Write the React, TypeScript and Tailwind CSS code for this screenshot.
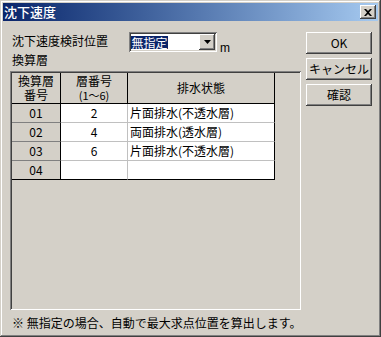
import React from "react";

const raised =
  "shadow-[inset_-1px_-1px_#404040,inset_1px_1px_#ffffff,inset_-2px_-2px_#808080,inset_2px_2px_#d4d0c8]";
const sunken =
  "shadow-[inset_1px_1px_#808080,inset_-1px_-1px_#ffffff,inset_2px_2px_#404040,inset_-2px_-2px_#d4d0c8]";

const rows = [
  { no: "01", layer: "2", state: "片面排水(不透水層)" },
  { no: "02", layer: "4", state: "両面排水(透水層)" },
  { no: "03", layer: "6", state: "片面排水(不透水層)" },
  { no: "04", layer: "", state: "" },
];

export default function App() {
  return (
    <div className="w-[381px] h-[337px] bg-[#d4d0c8] p-[3px] flex flex-col text-[12px] text-black font-['Noto_Sans_CJK_JP','Noto_Sans_CJK_SC',sans-serif] shadow-[inset_-1px_-1px_#404040,inset_1px_1px_#d4d0c8,inset_-2px_-2px_#808080,inset_2px_2px_#ffffff]">
      {/* Title bar */}
      <div className="h-[18px] flex items-center justify-between bg-gradient-to-r from-[#0a246a] to-[#a6caf0] pl-[1px] pr-[2px]">
        <span className="text-white text-[13px] leading-[18px] font-medium">沈下速度</span>
        <div className={`w-[16px] h-[14px] bg-[#d4d0c8] flex items-center justify-center ${raised}`}>
          <svg width="8" height="7" viewBox="0 0 8 7">
            <path d="M0 0h2l2 2 2-2h2L5 3.5 8 7H6L4 5 2 7H0l3-3.5z" fill="#000" />
          </svg>
        </div>
      </div>

      {/* Body */}
      <div className="flex flex-1">
        <div className="w-[298px] pl-[7px] pt-[11px] flex flex-col">
          <div className="flex h-[20px]">
            <span className="w-[117px] ml-[2px] leading-[18px]">沈下速度検討位置</span>
            <div className={`w-[88px] h-[20px] bg-white p-[2px] flex items-stretch justify-between ${sunken}`}>
              <div className="flex items-center">
                <span className="bg-[#0a246a] text-white h-[13px] leading-[13px] px-[0.5px]">無指定</span>
              </div>
              <div className={`w-[16px] bg-[#d4d0c8] flex items-center justify-center ${raised}`}>
                <svg width="7" height="4" viewBox="0 0 7 4">
                  <path d="M0 0h7L3.5 4z" fill="#000" />
                </svg>
              </div>
            </div>
            <span className="ml-[3px] pt-[9px] leading-[14px] text-[12px] font-['Liberation_Sans',sans-serif]">m</span>
          </div>

          <div className="ml-[2px] leading-[14px] h-[14px] mt-[1px]">換算層</div>

          <div className={`mt-[4px] w-[291px] h-[239px] p-[2px] ${sunken}`}>
            <div className="grid grid-cols-[49px_67px_147px] grid-rows-[31px_19px_19px_19px_19px] w-[263px]">
              <div className="bg-[#d4d0c8] border-r border-b border-black flex flex-col items-center justify-center text-[12px] leading-[14px] text-center">
                <span>換算層</span>
                <span>番号</span>
              </div>
              <div className="bg-[#d4d0c8] border-r border-b border-black flex flex-col items-center justify-center text-[12px] leading-[14px] text-center">
                <span>層番号</span>
                <span className="text-[11px]">(1～6)</span>
              </div>
              <div className="bg-[#d4d0c8] border-r border-b border-black flex items-center justify-center">
                排水状態
              </div>
              {rows.map((r, i) => {
                const last = i === rows.length - 1;
                return (
                  <React.Fragment key={r.no}>
                    <div
                      className={`bg-[#d4d0c8] border-r border-r-black border-b flex items-center justify-center leading-[18px] ${
                        last ? "border-b-black" : "border-b-[#808080]"
                      }`}
                    >
                      {r.no}
                    </div>
                    <div
                      className={`bg-white border-r border-r-[#c0c0c0] border-b flex items-center justify-center leading-[18px] ${
                        last ? "border-b-black" : "border-b-[#c0c0c0]"
                      }`}
                    >
                      {r.layer}
                    </div>
                    <div
                      className={`bg-white border-r border-r-black border-b flex items-center pl-[2px] leading-[18px] ${
                        last ? "border-b-black" : "border-b-[#c0c0c0]"
                      }`}
                    >
                      {r.state}
                    </div>
                  </React.Fragment>
                );
              })}
            </div>
          </div>

          <div className="mt-[6px] ml-[2px] leading-[14px] whitespace-nowrap">
            ※ 無指定の場合、自動で最大求点位置を算出します。
          </div>
        </div>

        <div className="ml-[5px] pt-[11px] flex flex-col gap-[4px]">
          {["OK", "キャンセル", "確認"].map((t) => (
            <div
              key={t}
              className={`w-[66px] h-[22px] bg-[#d4d0c8] flex items-center justify-center leading-[22px] ${raised}`}
            >
              {t}
            </div>
          ))}
        </div>
      </div>
    </div>
  );
}
